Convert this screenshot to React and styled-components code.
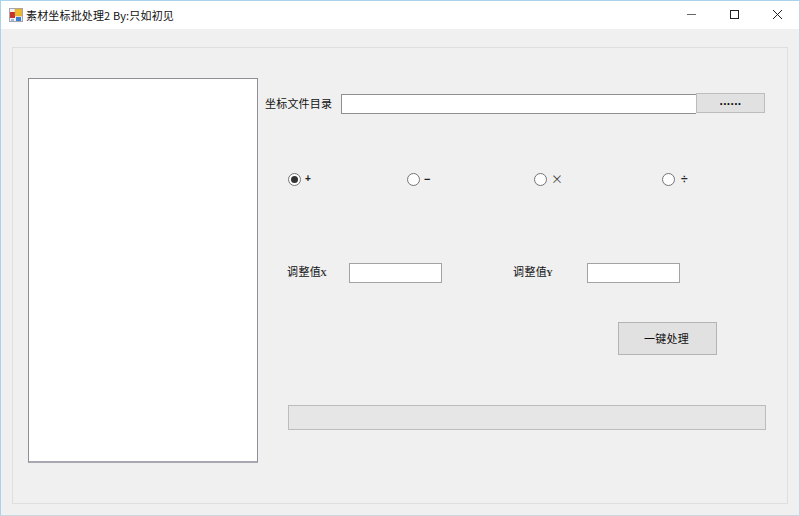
import React from "react";
import styled, { createGlobalStyle } from "styled-components";

const GlobalStyle = createGlobalStyle`
  html, body {
    margin: 0;
    padding: 0;
    background: #f0f0f0;
  }
  * {
    box-sizing: border-box;
  }
`;

const Window = styled.div`
  width: 800px;
  height: 516px;
  display: flex;
  flex-direction: column;
  overflow: hidden;
  background: #f0f0f0;
  border-top: 1px solid #a9d3ea;
  border-left: 1px solid #a9d3ea;
  border-right: 1px solid #c3d6e2;
  border-bottom: 1px solid #c9d6de;
  font-family: "Noto Sans CJK SC", "Liberation Sans", sans-serif;
  font-size: 11px;
  letter-spacing: 0.2px;
  color: #111;
`;

const TitleBar = styled.div`
  height: 28px;
  flex: none;
  display: flex;
  align-items: center;
  background: #fff;
  padding-left: 8px;
`;

const Title = styled.span`
  margin-left: 3px;
  letter-spacing: 0.16px;
`;

const WinButtons = styled.div`
  margin-left: auto;
  display: flex;
  height: 100%;
  padding-bottom: 2px;
`;

const WinButton = styled.div`
  width: 43px;
  height: 100%;
  display: flex;
  align-items: center;
  justify-content: center;
`;

const Body = styled.div`
  flex: 1;
  padding: 18px 11px 11px 11px;
`;

const Panel = styled.div`
  height: 100%;
  border: 1px solid #dfdfdf;
  padding: 30px 22px 39px 15px;
  display: flex;
`;

const ListBox = styled.div`
  width: 230px;
  height: 385px;
  flex: none;
  background: #fff;
  border: 1px solid #8e8e96;
  border-bottom: 2px solid #a8a8b0;
`;

const Side = styled.div`
  flex: 1;
  margin-left: 7px;
  display: flex;
  flex-direction: column;
`;

const PathRow = styled.div`
  margin-top: 16px;
  height: 20px;
  display: flex;
  align-items: center;
`;

const PathLabel = styled.label`
  width: 76px;
  flex: none;
  white-space: nowrap;
  margin-top: -3px;
`;

const PathInput = styled.div`
  width: 355px;
  height: 20px;
  background: #fff;
  border: 1px solid #8f8f8f;
  border-right: none;
`;

const BrowseButton = styled.div`
  width: 69px;
  height: 20px;
  margin-top: -2px;
  background: #e1e1e1;
  border: 1px solid #bdbdbd;
  display: flex;
  align-items: center;
  justify-content: center;
  font-size: 12px;
  font-weight: 700;
  line-height: 1;
  letter-spacing: 0.3px;
  padding-bottom: 5px;
  font-family: "Liberation Sans", sans-serif;
`;

const RadioRow = styled.div`
  margin-top: 56px;
  margin-left: 23px;
  height: 18px;
  display: grid;
  grid-template-columns: 119px 127px 128px auto;
`;

const RadioItem = styled.div`
  display: flex;
  align-items: center;
  gap: ${(p) => p.$gap}px;
`;

const RadioDot = styled.span`
  width: 13px;
  height: 13px;
  border-radius: 50%;
  border: 1.5px solid #747474;
  background: #fff;
  display: flex;
  align-items: center;
  justify-content: center;
  &::after {
    content: "";
    width: 7px;
    height: 7px;
    border-radius: 50%;
    background: ${(p) => (p.$checked ? "#333" : "transparent")};
  }
`;

const OpGlyph = styled.span`
  font-family: ${(p) => p.$font}, sans-serif;
  font-size: ${(p) => p.$size}px;
  font-weight: ${(p) => p.$weight};
  color: ${(p) => p.$color};
  line-height: 1;
`;

const AdjustRow = styled.div`
  margin-top: 75px;
  margin-left: 23px;
  height: 20px;
  display: flex;
  align-items: center;
`;

const AdjustLabel = styled.label`
  width: ${(p) => p.$width}px;
  flex: none;
  white-space: nowrap;
  margin: -4px 0 0 -1px;
  letter-spacing: 0.4px;
`;

const AxisLetter = styled.span`
  font-family: "Liberation Serif", serif;
  font-size: 9px;
  font-weight: 700;
  color: #333;
  margin-left: -1px;
`;

const AdjustInput = styled.div`
  width: 93px;
  height: 20px;
  flex: none;
  background: #fff;
  border: 1px solid #a3a3a3;
  margin-right: 72px;
`;

const ActionRow = styled.div`
  margin-top: 39px;
  display: flex;
  justify-content: flex-end;
  padding-right: 49px;
`;

const ActionButton = styled.div`
  width: 99px;
  height: 33px;
  padding: 0 2px 2px 0;
  background: #e1e1e1;
  border: 1px solid #b4b4b4;
  display: flex;
  align-items: center;
  justify-content: center;
`;

const ProgressBar = styled.div`
  margin-top: 50px;
  margin-left: 23px;
  width: 478px;
  height: 25px;
  background: #e6e6e6;
  border: 1px solid #bcbcbc;
`;

function AppIcon() {
  return (
    <svg width="14" height="14" viewBox="0 0 14 14">
      <rect x="0.5" y="0.5" width="13" height="13" fill="#f2f2f4" stroke="#a6a6b0" />
      <rect x="1" y="4" width="5" height="6" fill="#c8322a" />
      <rect x="6" y="1" width="7" height="7" fill="#f0b92e" stroke="#c9a24a" strokeWidth="0.5" />
      <rect x="7" y="9" width="5" height="4" fill="#3f7fd0" />
      <rect x="2" y="11" width="3" height="2" fill="#9fb7d8" />
    </svg>
  );
}

function MinIcon() {
  return (
    <svg width="9" height="9" viewBox="0 0 9 9">
      <rect x="0" y="4" width="9" height="1" fill="#666" />
    </svg>
  );
}

function MaxIcon() {
  return (
    <svg width="9" height="9" viewBox="0 0 9 9">
      <rect x="0.5" y="0.5" width="8" height="8" fill="none" stroke="#222" />
    </svg>
  );
}

function CloseIcon() {
  return (
    <svg width="9" height="9" viewBox="0 0 9 9">
      <path d="M0 0 L9 9 M9 0 L0 9" stroke="#222" fill="none" />
    </svg>
  );
}

const ops = [
  { glyph: "+", font: '"Liberation Sans"', size: 10, weight: 700, color: "#222", gap: 4 },
  { glyph: "−", font: '"Liberation Sans"', size: 11, weight: 700, color: "#222", gap: 4 },
  { glyph: "×", font: '"Noto Sans CJK SC"', size: 12, weight: 400, color: "#444", gap: 4 },
  { glyph: "÷", font: '"Liberation Sans"', size: 12, weight: 700, color: "#222", gap: 6 },
];

function App() {
  return (
    <>
      <GlobalStyle />
      <Window>
        <TitleBar>
          <AppIcon />
          <Title>素材坐标批处理2 By:只如初见</Title>
          <WinButtons>
            <WinButton><MinIcon /></WinButton>
            <WinButton><MaxIcon /></WinButton>
            <WinButton><CloseIcon /></WinButton>
          </WinButtons>
        </TitleBar>
        <Body>
          <Panel>
            <ListBox />
            <Side>
              <PathRow>
                <PathLabel>坐标文件目录</PathLabel>
                <PathInput />
                <BrowseButton>......</BrowseButton>
              </PathRow>
              <RadioRow>
                {ops.map((op, i) => (
                  <RadioItem key={op.glyph} $gap={op.gap}>
                    <RadioDot $checked={i === 0} />
                    <OpGlyph $font={op.font} $size={op.size} $weight={op.weight} $color={op.color}>
                      {op.glyph}
                    </OpGlyph>
                  </RadioItem>
                ))}
              </RadioRow>
              <AdjustRow>
                <AdjustLabel $width={62}>调整值<AxisLetter>X</AxisLetter></AdjustLabel>
                <AdjustInput />
                <AdjustLabel $width={74}>调整值<AxisLetter>Y</AxisLetter></AdjustLabel>
                <AdjustInput />
              </AdjustRow>
              <ActionRow>
                <ActionButton>一键处理</ActionButton>
              </ActionRow>
              <ProgressBar />
            </Side>
          </Panel>
        </Body>
      </Window>
    </>
  );
}

export default App;
